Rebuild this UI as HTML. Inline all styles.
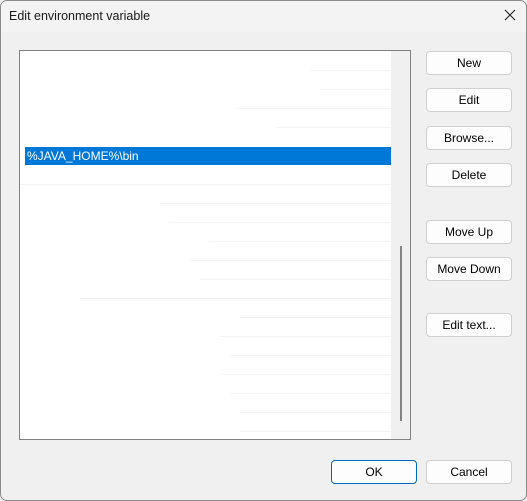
<!DOCTYPE html>
<html><head><style>
*{margin:0;padding:0;box-sizing:border-box}
body{width:527px;height:501px;background:#f0f0f0;font-family:"Liberation Sans",sans-serif;font-size:12px;color:#000;position:relative;overflow:hidden}
.win{position:absolute;left:0;top:0;width:527px;height:501px;border:1px solid #8a8a8a;border-radius:7px;background:#f0f0f0;overflow:hidden}
.title{position:absolute;left:0;top:0;width:100%;height:31px;background:#f3f3f3}
.title span{position:absolute;left:8px;top:8px;font-size:12.5px;color:#1a1a1a}
.x{position:absolute;right:8px;top:6px;width:16px;height:16px}
.list{position:absolute;left:18px;top:49px;width:392px;height:390px;border:1px solid #828282;background:#fff}
.sb{position:absolute;left:371px;top:0;width:19px;height:388px;background:#f0f0f0}
.thumb{position:absolute;left:9px;top:195px;width:2px;height:175px;background:#858585}
.line{position:absolute;height:1px;background:#f4f4f4}
.sel{position:absolute;left:5px;top:96px;width:366px;height:18px;background:#0078d7;color:#fff;padding:2px 2px;font-size:12px}
.btn{position:absolute;left:425px;width:86px;height:24px;background:#fdfdfd;border:1px solid #d0d0d0;border-radius:4px;text-align:center;line-height:22px;font-size:12px}
</style></head><body>
<div class="win">
<div class="title"><span>Edit environment variable</span>
<svg class="x" viewBox="0 0 16 16"><path d="M3 3L13 13M13 3L3 13" stroke="#222" stroke-width="1.1"/></svg></div>
<div class="list">
<div class="line" style="left:290px;top:19px;width:81px"></div>
<div class="line" style="left:300px;top:38px;width:71px"></div>
<div class="line" style="left:215px;top:57px;width:156px"></div>
<div class="line" style="left:255px;top:76px;width:116px"></div>
<div class="line" style="left:0;top:133px;width:371px"></div>
<div class="line" style="left:140px;top:152px;width:231px"></div>
<div class="line" style="left:150px;top:171px;width:221px"></div>
<div class="line" style="left:190px;top:190px;width:181px"></div>
<div class="line" style="left:170px;top:209px;width:201px"></div>
<div class="line" style="left:180px;top:228px;width:191px"></div>
<div class="line" style="left:60px;top:247px;width:311px"></div>
<div class="line" style="left:220px;top:266px;width:151px"></div>
<div class="line" style="left:200px;top:285px;width:171px"></div>
<div class="line" style="left:210px;top:304px;width:161px"></div>
<div class="line" style="left:200px;top:323px;width:171px"></div>
<div class="line" style="left:210px;top:342px;width:161px"></div>
<div class="line" style="left:220px;top:361px;width:151px"></div>
<div class="line" style="left:220px;top:380px;width:151px"></div>
<div class="sel">%JAVA_HOME%\bin</div>
<div class="sb"><div class="thumb"></div></div>
</div>
<div class="btn" style="top:50px">New</div>
<div class="btn" style="top:87px">Edit</div>
<div class="btn" style="top:125px">Browse...</div>
<div class="btn" style="top:162px">Delete</div>
<div class="btn" style="top:219px">Move Up</div>
<div class="btn" style="top:256px">Move Down</div>
<div class="btn" style="top:312px">Edit text...</div>
<div class="btn" style="top:459px;left:330px;border:1px solid #0067c0">OK</div>
<div class="btn" style="top:459px">Cancel</div>
</div>
</body></html>
